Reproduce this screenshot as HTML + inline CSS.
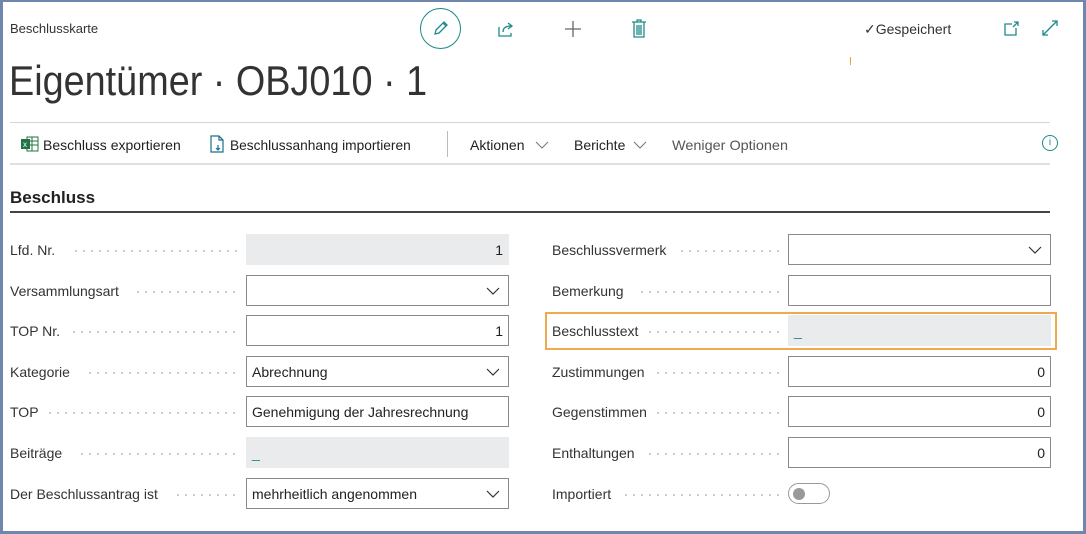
<!DOCTYPE html>
<html><head><meta charset="utf-8"><style>
*{margin:0;padding:0;box-sizing:border-box}
body{width:1086px;height:534px;overflow:hidden;background:#fff;font-family:"Liberation Sans",sans-serif;color:#212121;position:relative}
.frame{position:absolute;left:0;top:0;width:1086px;height:534px;border:3px solid #6f87ad;border-top-width:2px}
.a{position:absolute;white-space:nowrap}
.lab{position:absolute;font-size:14px;color:#333;white-space:nowrap}
.dots{position:absolute;height:2px;background-image:radial-gradient(circle,#bbb 0.8px,transparent 1px);background-size:8px 2px;background-repeat:repeat-x}
.inp{position:absolute;height:31px;border:1px solid #8a8a8a;background:#fff;font-size:14px;padding:0 5px;line-height:31px}
.ro{background:#eaebec;border-color:#eaebec}
.chev{position:absolute;right:8px;top:10px}
.r{text-align:right}
</style></head><body>
<div class="frame"></div>
<div class="a" style="left:10px;top:21px;font-size:13px;color:#333">Beschlusskarte</div>
<div class="a" style="left:420px;top:8px;width:41px;height:41px;border:1.5px solid #1d8a8a;border-radius:50%"></div>
<svg class="a" style="left:429px;top:17px" width="22" height="22" viewBox="0 0 22 22" fill="none" stroke="#1d8a8a" stroke-width="1.3"><path d="M6 17l1-4 8-8 3 3-8 8z M14 6l3 3"/></svg>
<svg class="a" style="left:496px;top:19px" width="20" height="20" viewBox="0 0 20 20" fill="none" stroke="#1d8a8a" stroke-width="1.3"><path d="M3 8v9h12v-3 M7 13c0-4 3-6 8-6 M12 4l4 3-4 3"/></svg>
<svg class="a" style="left:563px;top:19px" width="20" height="20" viewBox="0 0 20 20" stroke="#666" stroke-width="1.3"><path d="M10 2v16M2 10h16"/></svg>
<svg class="a" style="left:629px;top:18px" width="20" height="22" viewBox="0 0 20 22" fill="none" stroke="#1d8a8a" stroke-width="1.3"><path d="M3 4h14M8 4V2h4v2M5 4v15h10V4M8 7v10M10 7v10M12 7v10"/></svg>
<div class="a" style="left:864px;top:21px;font-size:14px;color:#333">✓Gespeichert</div>
<svg class="a" style="left:1002px;top:20px" width="18" height="18" viewBox="0 0 18 18" fill="none" stroke="#1d8a8a" stroke-width="1.3"><path d="M10 4H3v11h11V8 M12 2h4v4M16 2l-5 5"/></svg>
<svg class="a" style="left:1041px;top:19px" width="18" height="18" viewBox="0 0 18 18" fill="none" stroke="#1d8a8a" stroke-width="1.3"><path d="M2 16L16 2M11 2h5v5M2 11v5h5"/></svg>
<div class="a" style="left:850px;top:57px;width:1px;height:8px;background:#f0a040"></div>
<div class="a" style="left:9px;top:57px;font-size:42px;font-weight:300;color:#333;transform:scaleX(0.9);transform-origin:0 0">Eigentümer · OBJ010 · 1</div>
<div class="a" style="left:10px;top:122px;width:1040px;height:1px;background:#d5d5d5"></div>
<div class="a" style="left:10px;top:163px;width:1040px;height:2px;background:#e0e0e0"></div>
<svg class="a" style="left:21px;top:136px" width="18" height="16" viewBox="0 0 18 16"><rect x="6" y="1" width="11" height="14" fill="none" stroke="#217346"/><path d="M6 5h11M6 9h11M11 1v14" stroke="#217346"/><rect x="0" y="3" width="9" height="10" fill="#217346"/><text x="2" y="11" font-size="8" fill="#fff" font-family="Liberation Sans">x</text></svg>
<div class="a" style="left:43px;top:137px;font-size:14px">Beschluss exportieren</div>
<svg class="a" style="left:209px;top:135px" width="16" height="18" viewBox="0 0 16 18" fill="none" stroke="#1d6f8a" stroke-width="1.2"><path d="M2 1h8l4 4v12H2z M10 1v4h4 M9 10v5M7 13l2 2 2-2"/></svg>
<div class="a" style="left:230px;top:137px;font-size:14px;transform:scaleX(.98);transform-origin:0 0">Beschlussanhang importieren</div>
<div class="a" style="left:447px;top:131px;width:1px;height:26px;background:#bbb"></div>
<div class="a" style="left:470px;top:137px;font-size:14px">Aktionen</div>
<svg class="a" style="left:535px;top:140px" width="14" height="10" viewBox="0 0 14 10" fill="none" stroke="#777"><path d="M1 2l6 6 6-6"/></svg>
<div class="a" style="left:574px;top:137px;font-size:14px">Berichte</div>
<svg class="a" style="left:633px;top:140px" width="14" height="10" viewBox="0 0 14 10" fill="none" stroke="#777"><path d="M1 2l6 6 6-6"/></svg>
<div class="a" style="left:672px;top:137px;font-size:14px;color:#555;transform:scaleX(1.03);transform-origin:0 0">Weniger Optionen</div>
<div class="a" style="left:1042px;top:135px;width:16px;height:16px;border:1.3px solid #1d8a8a;border-radius:50%;font-size:10px;color:#1d8a8a;text-align:center;line-height:13px">i</div>
<div class="a" style="left:10px;top:188px;font-size:17px;font-weight:bold">Beschluss</div>
<div class="a" style="left:10px;top:211px;width:1040px;height:2px;background:#444"></div>

<div class="a" style="left:545px;top:312px;width:512px;height:38px;border:2px solid #f0a94f"></div>

<div class="lab" style="left:10px;top:242px">Lfd. Nr.</div><div class="dots" style="left:72px;width:166px;top:250px"></div>
<div class="inp ro r" style="left:246px;top:234px;width:263px">1</div>
<div class="lab" style="left:10px;top:283px">Versammlungsart</div><div class="dots" style="left:134px;width:104px;top:291px"></div>
<div class="inp" style="left:246px;top:275px;width:263px"><svg class="chev" width="14" height="10" viewBox="0 0 14 10" fill="none" stroke="#333" stroke-width="1.2"><path d="M1 2l6 6 6-6"/></svg></div>
<div class="lab" style="left:10px;top:323px">TOP Nr.</div><div class="dots" style="left:70px;width:168px;top:331px"></div>
<div class="inp r" style="left:246px;top:315px;width:263px">1</div>
<div class="lab" style="left:10px;top:364px">Kategorie</div><div class="dots" style="left:86px;width:152px;top:372px"></div>
<div class="inp" style="left:246px;top:356px;width:263px">Abrechnung<svg class="chev" width="14" height="10" viewBox="0 0 14 10" fill="none" stroke="#333" stroke-width="1.2"><path d="M1 2l6 6 6-6"/></svg></div>
<div class="lab" style="left:10px;top:404px">TOP</div><div class="dots" style="left:46px;width:192px;top:412px"></div>
<div class="inp" style="left:246px;top:396px;width:263px">Genehmigung der Jahresrechnung</div>
<div class="lab" style="left:10px;top:445px">Beiträge</div><div class="dots" style="left:78px;width:160px;top:453px"></div>
<div class="inp ro" style="left:246px;top:437px;width:263px;color:#1d8a8a">_</div>
<div class="lab" style="left:10px;top:486px">Der Beschlussantrag ist</div><div class="dots" style="left:174px;width:64px;top:494px"></div>
<div class="inp" style="left:246px;top:478px;width:263px">mehrheitlich angenommen<svg class="chev" width="14" height="10" viewBox="0 0 14 10" fill="none" stroke="#333" stroke-width="1.2"><path d="M1 2l6 6 6-6"/></svg></div>

<div class="lab" style="left:552px;top:242px">Beschlussvermerk</div><div class="dots" style="left:678px;width:102px;top:250px"></div>
<div class="inp" style="left:788px;top:234px;width:263px"><svg class="chev" width="14" height="10" viewBox="0 0 14 10" fill="none" stroke="#333" stroke-width="1.2"><path d="M1 2l6 6 6-6"/></svg></div>
<div class="lab" style="left:552px;top:283px">Bemerkung</div><div class="dots" style="left:638px;width:142px;top:291px"></div>
<div class="inp" style="left:788px;top:275px;width:263px"></div>
<div class="lab" style="left:552px;top:323px">Beschlusstext</div><div class="dots" style="left:646px;width:134px;top:331px"></div>
<div class="inp ro" style="left:788px;top:315px;width:263px;color:#1d8a8a">_</div>
<div class="lab" style="left:552px;top:364px">Zustimmungen</div><div class="dots" style="left:654px;width:126px;top:372px"></div>
<div class="inp r" style="left:788px;top:356px;width:263px">0</div>
<div class="lab" style="left:552px;top:404px">Gegenstimmen</div><div class="dots" style="left:654px;width:126px;top:412px"></div>
<div class="inp r" style="left:788px;top:396px;width:263px">0</div>
<div class="lab" style="left:552px;top:445px">Enthaltungen</div><div class="dots" style="left:646px;width:134px;top:453px"></div>
<div class="inp r" style="left:788px;top:437px;width:263px">0</div>
<div class="lab" style="left:552px;top:486px">Importiert</div><div class="dots" style="left:622px;width:158px;top:494px"></div>
<div class="a" style="left:788px;top:483px;width:42px;height:21px;border:1px solid #999;border-radius:11px"><div style="position:absolute;left:4px;top:4px;width:12px;height:12px;border-radius:50%;background:#999"></div></div>
</body></html>
